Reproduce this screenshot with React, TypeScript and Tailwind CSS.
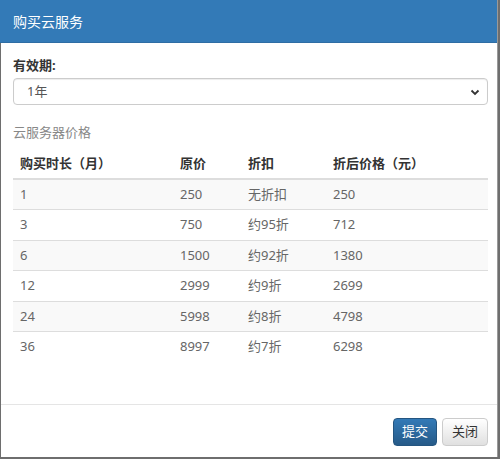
export default function App() {
  const rows = [
    ["1", "250", "无折扣", "250"],
    ["3", "750", "约95折", "712"],
    ["6", "1500", "约92折", "1380"],
    ["12", "2999", "约9折", "2699"],
    ["24", "5998", "约8折", "4798"],
    ["36", "8997", "约7折", "6298"],
  ];

  return (
    <div
      className="w-[500px] h-[459px] bg-[#6e6e6e] pl-px"
      style={{ fontFamily: '"Noto Sans", "Noto Sans CJK SC", sans-serif' }}
    >
      <div className="w-[497px] h-[457px] bg-white flex flex-col border-r border-[#9a9a9a]">
        <div className="h-[43px] bg-[#337ab7] border-b border-[#2e6da4] flex items-center px-[13px] text-white text-[14px] -ml-px">
          购买云服务
        </div>

        <div className="flex-1 pl-[12px] pr-[9px] pt-[12px]">
          <div className="text-[13px] font-bold text-[#333] leading-[20px]">有效期:</div>
          <div className="mt-[3px] h-[27px] border border-[#ccc] rounded-[4px] flex items-center justify-between pl-[13px] pr-[7px] shadow-[inset_0_1px_1px_rgba(0,0,0,0.075)]">
            <span className="text-[13px] text-[#555]">1年</span>
            <svg width="10" height="10" viewBox="0 0 10 10">
              <path d="M1.5 3.5 L5 7 L8.5 3.5" fill="none" stroke="#333" strokeWidth="1.8" />
            </svg>
          </div>

          <div className="mt-[17px] text-[13px] text-[#888] leading-[20px]">云服务器价格</div>

          <table className="mt-[8px] w-full border-collapse text-[13px]">
            <thead>
              <tr className="h-[29px] border-b-2 border-[#ddd]">
                <th className="w-[159px] text-left font-bold text-[#333] pl-[7px]">购买时长（月）</th>
                <th className="w-[68px] text-left font-bold text-[#333] pl-[8px]">原价</th>
                <th className="w-[85px] text-left font-bold text-[#333] pl-[8px]">折扣</th>
                <th className="text-left font-bold text-[#333] pl-[8px]">折后价格（元）</th>
              </tr>
            </thead>
            <tbody>
              {rows.map((r, i) => (
                <tr
                  key={r[0]}
                  className={`h-[30.5px] border-t border-[#ddd] text-[#666] ${i % 2 === 0 ? "bg-[#f9f9f9]" : "bg-white"}`}
                >
                  <td className="pl-[7px]">{r[0]}</td>
                  <td className="pl-[8px]">{r[1]}</td>
                  <td className="pl-[8px]">{r[2]}</td>
                  <td className="pl-[8px]">{r[3]}</td>
                </tr>
              ))}
            </tbody>
          </table>
        </div>

        <div className="h-[53px] border-t border-[#e5e5e5] flex items-start justify-end gap-[5px] pt-[13px] pr-[9px]">
          <button className="h-[28px] px-[8px] rounded-[4px] text-[13px] text-white border border-[#245580] bg-gradient-to-b from-[#337ab7] to-[#265a88]">
            提交
          </button>
          <button className="h-[28px] px-[9px] rounded-[4px] text-[13px] text-[#333] border border-[#ccc] bg-gradient-to-b from-white to-[#e0e0e0]">
            关闭
          </button>
        </div>
      </div>
    </div>
  );
}
